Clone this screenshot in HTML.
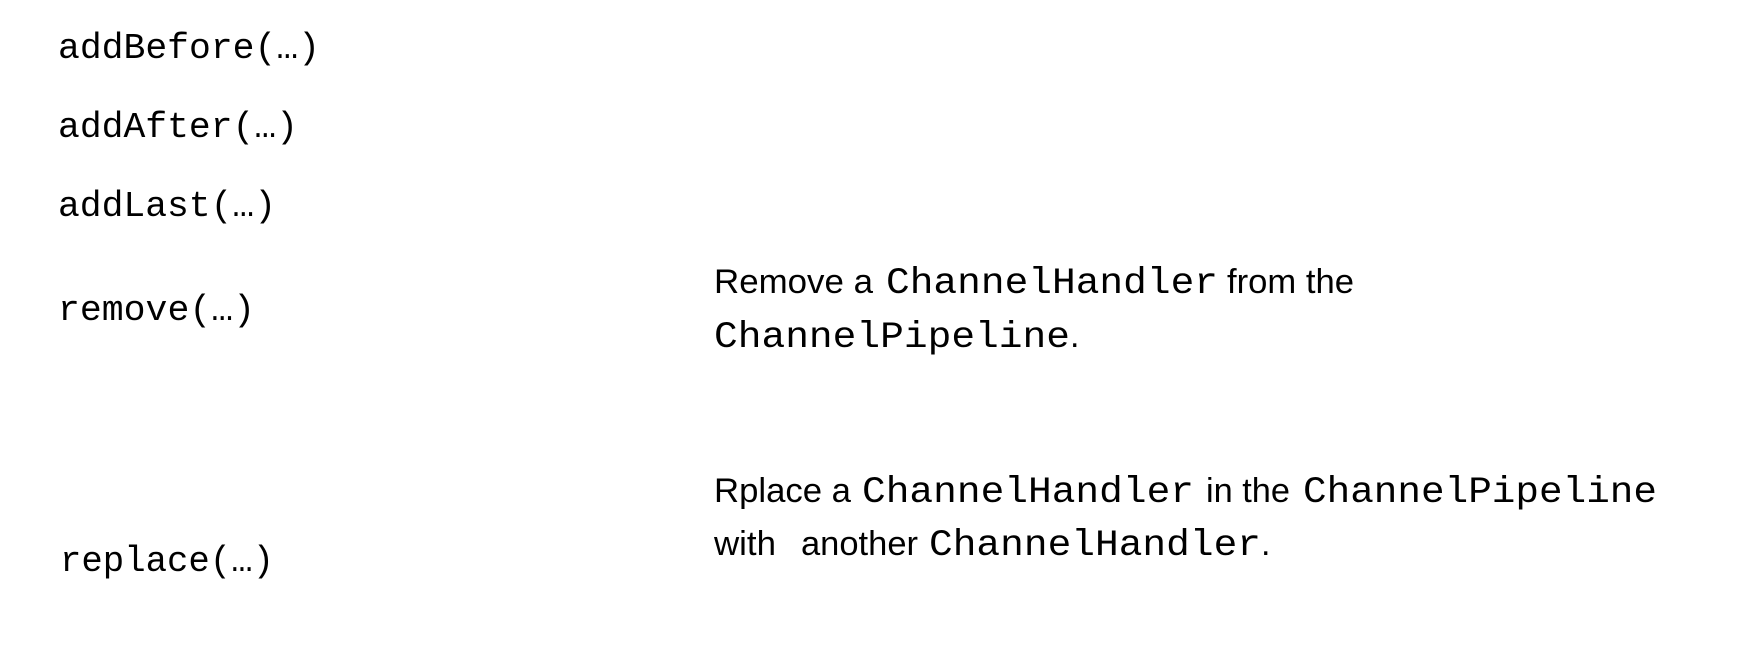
<!DOCTYPE html>
<html><head><meta charset="utf-8"><style>html,body{margin:0;padding:0;background:#fff;width:1746px;height:656px;overflow:hidden}</style></head>
<body>
<svg width="1746" height="656" xmlns="http://www.w3.org/2000/svg">
<g font-family="Liberation Mono, monospace" font-size="36" fill="#000">
<text x="58" y="58" textLength="262" lengthAdjust="spacingAndGlyphs">addBefore(…)</text>
<text x="58" y="137" textLength="240" lengthAdjust="spacingAndGlyphs">addAfter(…)</text>
<text x="58" y="216" textLength="218" lengthAdjust="spacingAndGlyphs">addLast(…)</text>
<text x="58" y="320" textLength="197" lengthAdjust="spacingAndGlyphs">remove(…)</text>
<text x="60" y="571" textLength="214" lengthAdjust="spacingAndGlyphs">replace(…)</text>
</g>
<g font-family="Liberation Sans, Arial, sans-serif" font-size="34" fill="#000">
<text x="714" y="293" textLength="159" lengthAdjust="spacingAndGlyphs">Remove a</text>
<text x="1227" y="293" textLength="127" lengthAdjust="spacingAndGlyphs">from the</text>
<text x="1070" y="347">.</text>
<text x="714" y="502" textLength="137" lengthAdjust="spacingAndGlyphs">Rplace a</text>
<text x="1206" y="502" textLength="84" lengthAdjust="spacingAndGlyphs">in the</text>
<text x="714" y="555" textLength="62" lengthAdjust="spacingAndGlyphs">with</text>
<text x="801" y="555" textLength="117" lengthAdjust="spacingAndGlyphs">another</text>
<text x="1261" y="555">.</text>
</g>
<g font-family="Liberation Mono, monospace" font-size="37" fill="#000">
<text x="886" y="293" textLength="332" lengthAdjust="spacingAndGlyphs">ChannelHandler</text>
<text x="714" y="347" textLength="356" lengthAdjust="spacingAndGlyphs">ChannelPipeline</text>
<text x="862" y="502" textLength="332" lengthAdjust="spacingAndGlyphs">ChannelHandler</text>
<text x="1303" y="502" textLength="354" lengthAdjust="spacingAndGlyphs">ChannelPipeline</text>
<text x="929" y="555" textLength="332" lengthAdjust="spacingAndGlyphs">ChannelHandler</text>
</g>
</svg>
</body></html>
